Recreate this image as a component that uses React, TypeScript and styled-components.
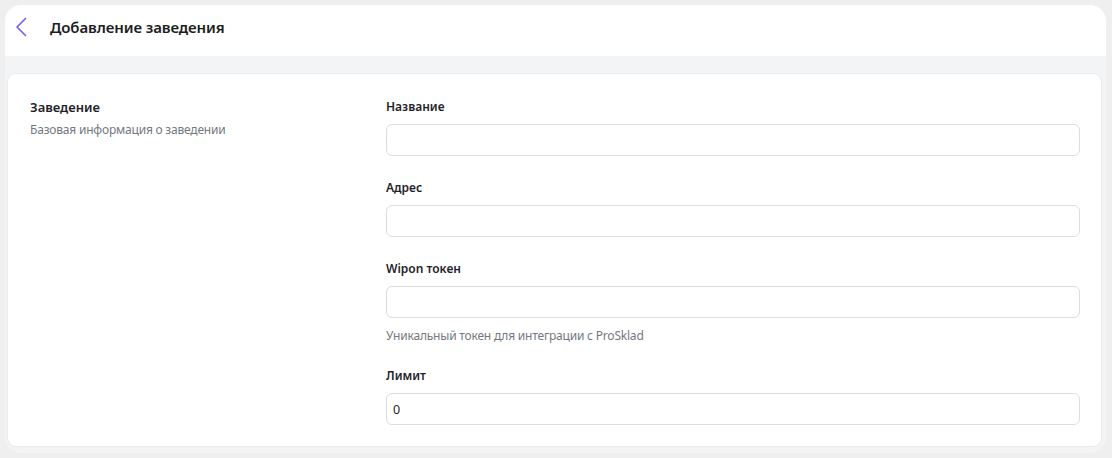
import React from "react";
import styled, { createGlobalStyle } from "styled-components";

const Global = createGlobalStyle`
  html, body { margin: 0; padding: 0; }
  body {
    background: #efeff0;
    font-family: "Noto Sans", "Open Sans", sans-serif;
    color: #1f2329;
  }
  * { box-sizing: border-box; }
`;

const Frame = styled.div`
  margin: 5px 6px 5px 5px;
  height: 448px;
  border-radius: 16px;
  overflow: hidden;
  background: #f3f4f6;
  display: flex;
  flex-direction: column;
`;

const Header = styled.header`
  height: 51px;
  flex: none;
  background: #ffffff;
  display: flex;
  align-items: center;
  padding: 0 0 7px 8px;
  gap: 21px;
`;

const BackButton = styled.button`
  border: none;
  background: transparent;
  padding: 0;
  width: 16px;
  height: 22px;
  display: flex;
  align-items: center;
  justify-content: center;
  cursor: pointer;
  color: #7464ec;
`;

const Title = styled.h1`
  margin: 0;
  font-size: 15px;
  font-weight: 600;
  color: #1b1d21;
  letter-spacing: -0.1px;
`;

const Content = styled.main`
  flex: 1;
  padding: 18px 5px 8px 3px;
  display: flex;
`;

const Card = styled.section`
  flex: 1;
  background: #ffffff;
  border-radius: 8px;
  box-shadow: 0 0 0 1px #ececef, 0 1px 2px rgba(0, 0, 0, 0.04);
  padding: 23px 21px 21px 22px;
  display: grid;
  grid-template-columns: 332px 1fr;
  column-gap: 24px;
  align-items: start;
`;

const Intro = styled.div`
  display: flex;
  flex-direction: column;
  gap: 3px;
`;

const SectionTitle = styled.h2`
  margin: 0;
  font-size: 13px;
  line-height: 20px;
  font-weight: 600;
  color: #1f2329;
`;

const SectionText = styled.p`
  margin: 0;
  font-size: 12px;
  line-height: 20px;
  letter-spacing: -0.2px;
  color: #737880;
`;

const Fields = styled.div`
  display: flex;
  flex-direction: column;
  gap: 22px;
`;

const Field = styled.div`
  display: flex;
  flex-direction: column;
`;

const Label = styled.label`
  font-size: 12px;
  line-height: 20px;
  font-weight: 600;
  color: #1f2329;
  margin-bottom: 7px;
`;

const Input = styled.input`
  height: 32px;
  width: 100%;
  border: 1px solid #dcdce1;
  border-radius: 6px;
  padding: 0 6px;
  font-family: "Noto Sans", "Open Sans", sans-serif;
  font-size: 12.5px;
  color: #1f2329;
  background: #ffffff;
  outline: none;
`;

const Hint = styled.p`
  margin: 10px 0 0;
  font-size: 12px;
  line-height: 16px;
  letter-spacing: -0.2px;
  color: #737880;
`;

const ChevronLeft = () => (
  <svg width="12" height="20" viewBox="0 0 12 20" fill="none">
    <path
      d="M10.5 1.5 L2 10 L10.5 18.5"
      stroke="currentColor"
      strokeWidth="1.7"
      strokeLinecap="round"
      strokeLinejoin="round"
    />
  </svg>
);

const fields: { id: string; label: string; value?: string; hint?: string }[] = [
  { id: "name", label: "Название" },
  { id: "address", label: "Адрес" },
  { id: "token", label: "Wipon токен", hint: "Уникальный токен для интеграции с ProSklad" },
  { id: "limit", label: "Лимит", value: "0" },
];

export default function App() {
  return (
    <>
      <Global />
      <Frame>
        <Header>
          <BackButton aria-label="Назад">
            <ChevronLeft />
          </BackButton>
          <Title>Добавление заведения</Title>
        </Header>
        <Content>
          <Card>
            <Intro>
              <SectionTitle>Заведение</SectionTitle>
              <SectionText>Базовая информация о заведении</SectionText>
            </Intro>
            <Fields>
              {fields.map((f) => (
                <Field key={f.id}>
                  <Label htmlFor={f.id}>{f.label}</Label>
                  <Input id={f.id} defaultValue={f.value ?? ""} />
                  {f.hint && <Hint>{f.hint}</Hint>}
                </Field>
              ))}
            </Fields>
          </Card>
        </Content>
      </Frame>
    </>
  );
}
